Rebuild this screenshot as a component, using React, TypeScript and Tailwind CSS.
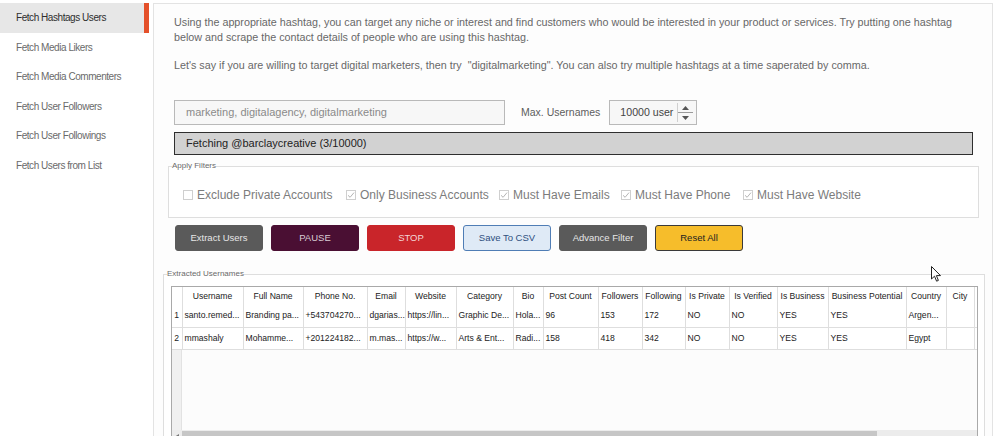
import React from "react";

const menu = [
  "Fetch Hashtags Users",
  "Fetch Media Likers",
  "Fetch Media Commenters",
  "Fetch User Followers",
  "Fetch User Followings",
  "Fetch Users from List",
];

const filters = [
  { label: "Exclude Private Accounts", checked: false, w: "w-[163px]" },
  { label: "Only Business Accounts", checked: true, w: "w-[153px]" },
  { label: "Must Have Emails", checked: true, w: "w-[122px]" },
  { label: "Must Have Phone", checked: true, w: "w-[122px]" },
  { label: "Must Have Website", checked: true, w: "w-[130px]" },
];

const buttons = [
  { label: "Extract Users", cls: "bg-[#5a5a5a] text-[#e6e6e6] border-[#5a5a5a]" },
  { label: "PAUSE", cls: "bg-[#4a0f33] text-[#d9cdd4] border-[#4a0f33]" },
  { label: "STOP", cls: "bg-[#c9252a] text-[#f3d6d6] border-[#c9252a]" },
  { label: "Save To CSV", cls: "bg-[#dfeaf6] text-[#2e4f7e] border-[#4f7db5]" },
  { label: "Advance Filter", cls: "bg-[#5a5a5a] text-[#e6e6e6] border-[#5a5a5a]" },
  { label: "Reset All", cls: "bg-[#f6bd2b] text-[#222] border-[#3a3a3a]" },
];

const columns = [
  { h: "", w: "w-[10px]" },
  { h: "Username", w: "w-[61px]" },
  { h: "Full Name", w: "w-[60px]" },
  { h: "Phone No.", w: "w-[64px]" },
  { h: "Email", w: "w-[38px]" },
  { h: "Website", w: "w-[51px]" },
  { h: "Category", w: "w-[57px]" },
  { h: "Bio", w: "w-[30px]" },
  { h: "Post Count", w: "w-[55px]" },
  { h: "Followers", w: "w-[44px]" },
  { h: "Following", w: "w-[43px]" },
  { h: "Is Private", w: "w-[44px]" },
  { h: "Is Verified", w: "w-[48px]" },
  { h: "Is Business", w: "w-[51px]" },
  { h: "Business Potential", w: "w-[78px]" },
  { h: "Country", w: "w-[40px]" },
  { h: "City", w: "w-[28px]" },
  { h: "", w: "w-[60px]" },
];

const rows = [
  ["1", "santo.remed...", "Branding pa...", "+543704270...", "dgarias...", "https://lin...", "Graphic De...", "Hola...", "96", "153", "172", "NO", "NO", "YES", "YES", "Argen...", "", ""],
  ["2", "mmashaly", "Mohamme...", "+201224182...", "m.mas...", "https://w...", "Arts & Ent...", "Radi...", "158", "418", "342", "NO", "NO", "YES", "YES", "Egypt", "", ""],
];

function Check({ label, checked, w }: { label: string; checked: boolean; w: string }) {
  return (
    <div className={`flex items-center gap-[4px] shrink-0 ${w}`}>
      <span className="w-[10px] h-[10px] border border-[#cfcfcf] bg-white flex items-center justify-center">
        {checked && (
          <svg width="8" height="8" viewBox="0 0 8 8">
            <path d="M1 4.3 L3.1 6.3 L7 1.6" stroke="#b4b4b4" strokeWidth="1" fill="none" />
          </svg>
        )}
      </span>
      <span className="whitespace-nowrap">{label}</span>
    </div>
  );
}

export default function App() {
  return (
    <div className="relative w-[1002px] h-[436px] overflow-hidden bg-white flex font-['Liberation_Sans',Arial,sans-serif]">
      {/* sidebar */}
      <aside className="w-[150px] shrink-0 pt-[3px]">
        {menu.map((item, i) => (
          <div key={item} className="flex h-[29.5px]">
            <div
              className={
                i === 0
                  ? "w-[144px] bg-[#e7e7e7] text-[#2e2e2e] flex items-center pl-[16px] text-[10px] tracking-[-0.45px]"
                  : "w-[144px] text-[#6a6a6a] flex items-center pl-[16px] text-[10px] tracking-[-0.45px]"
              }
            >
              {item}
            </div>
            {i === 0 && <div className="w-[5px] bg-[#e4502a]" />}
          </div>
        ))}
      </aside>

      {/* main panel */}
      <main className="ml-[3px] mt-[3px] w-[840px] h-[450px] shrink-0 border border-[#e3e3e3] bg-[#fdfdfd] flex flex-col">
        <div className="pl-[20px] pt-[11px] text-[10.75px] leading-[15px] text-[#686868] whitespace-nowrap">
          <p>
            Using the appropriate hashtag, you can target any niche or interest and find customers who would be interested in your product or services. Try putting one hashtag
            <br />
            below and scrape the contact details of people who are using this hashtag.
          </p>
          <p className="mt-[13px]">
            Let's say if you are willing to target digital marketers, then try&nbsp; "digitalmarketing". You can also try multiple hashtags at a time saperated by comma.
          </p>
        </div>

        <div className="mt-[27px] ml-[20px] flex items-center h-[25px]">
          <div className="w-[331px] h-[25px] border border-[#b9b9b9] bg-[#f7f7f7] flex items-center pl-[11px] text-[11px] text-[#8a8a8a]">
            marketing, digitalagency, digitalmarketing
          </div>
          <span className="ml-[16px] text-[10.5px] text-[#5e5e5e]">Max. Usernames</span>
          <div className="ml-[9px] w-[88px] h-[25px] border border-[#b9b9b9] bg-[#f7f7f7] flex items-center pl-[10px] text-[10.6px] text-[#444]">
            <span className="flex-1">10000 user</span>
            <div className="w-[16px] h-[19px] mr-[3px] flex flex-col border-l border-[#d0d0d0]">
              <div className="flex-1 flex items-center justify-center border-b border-[#9a9a9a]">
                <svg width="7" height="4" viewBox="0 0 7 4">
                  <path d="M0 4 L3.5 0 L7 4 Z" fill="#555" />
                </svg>
              </div>
              <div className="flex-1 flex items-center justify-center">
                <svg width="7" height="4" viewBox="0 0 7 4">
                  <path d="M0 0 L3.5 4 L7 0 Z" fill="#555" />
                </svg>
              </div>
            </div>
          </div>
        </div>

        <div className="mt-[7px] ml-[20px] w-[799px] h-[23px] border border-[#2e2e2e] bg-[#d2d2d2] flex items-center pl-[11px] text-[11px] text-[#222]">
          Fetching @barclaycreative (3/10000)
        </div>

        <fieldset className="mt-[6px] ml-[14px] w-[811px] min-w-0 border border-[#dedede] bg-white">
          <legend className="ml-[3px] text-[8px] leading-[10px] text-[#6a6a6a]">Apply Filters</legend>
          <div className="pt-[17px] pb-[15px] pl-[14px] flex items-center h-[46px] text-[12px] text-[#7c7c7c]">
            {filters.map((f) => (
              <Check key={f.label} label={f.label} checked={f.checked} w={f.w} />
            ))}
          </div>
        </fieldset>

        <div className="mt-[7px] ml-[21px] flex gap-[8px]">
          {buttons.map((b) => (
            <div
              key={b.label}
              className={`w-[88px] h-[26px] rounded-[3px] border flex items-center justify-center text-[9.5px] ${b.cls}`}
            >
              {b.label}
            </div>
          ))}
        </div>

        <fieldset className="mt-[18px] ml-[9px] w-[822px] min-w-0 flex-1 border border-[#dedede] bg-white">
          <legend className="ml-[3px] text-[8px] leading-[10px] text-[#6a6a6a]">Extracted Usernames</legend>
          <div className="mt-[7px] ml-[7px] w-[807px] h-[158px] border border-[#a9a9a9] bg-[#fbfbfb] flex flex-col overflow-hidden">
            <div className="w-[805px] overflow-hidden">
              <table className="table-fixed border-collapse w-[862px] text-[8.6px] text-[#222]">
                <colgroup>
                  {columns.map((c, i) => (
                    <col key={i} className={c.w} />
                  ))}
                </colgroup>
                <thead>
                  <tr className="h-[18px] bg-white">
                    {columns.map((c, i) => (
                      <th key={i} className="font-normal text-center border-r border-[#dedede] whitespace-nowrap overflow-hidden px-[1px]">
                        {c.h}
                      </th>
                    ))}
                  </tr>
                </thead>
                <tbody>
                  {rows.map((r) => (
                    <tr key={r[0]} className="h-[22px] bg-white border-b border-[#dedede]">
                      {r.map((cell, i) => (
                        <td
                          key={i}
                          className={
                            i === 0
                              ? "text-center border-r border-[#dedede]"
                              : "text-left pl-[2px] border-r border-[#dedede] whitespace-nowrap overflow-hidden"
                          }
                        >
                          {cell}
                        </td>
                      ))}
                    </tr>
                  ))}
                </tbody>
              </table>
            </div>
            <div className="flex-1 flex">
              <div className="w-[10px] bg-[#f0f0f0] border-r border-[#e2e2e2]" />
              <div className="flex-1 bg-[#fcfcfc]" />
            </div>
            <div className="h-[13px] bg-[#ececec] flex items-center">
              <div className="w-[10px] flex justify-center">
                <svg width="4" height="5" viewBox="0 0 4 5">
                  <path d="M4 0 L0 2.5 L4 5 Z" fill="#777" />
                </svg>
              </div>
              <div className="w-[695px] h-[11px] bg-[#c6c6c6]" />
            </div>
          </div>
        </fieldset>
      </main>

      {/* mouse pointer */}
      <svg className="absolute left-[931px] top-[266px]" width="11" height="17" viewBox="0 0 11 17">
        <path d="M0.5 0.5 L0.5 13 L3.5 10.2 L5.6 15.2 L7.4 14.4 L5.4 9.6 L9.5 9.6 Z" fill="#fff" stroke="#222" strokeWidth="1" strokeLinejoin="round" />
      </svg>
    </div>
  );
}
